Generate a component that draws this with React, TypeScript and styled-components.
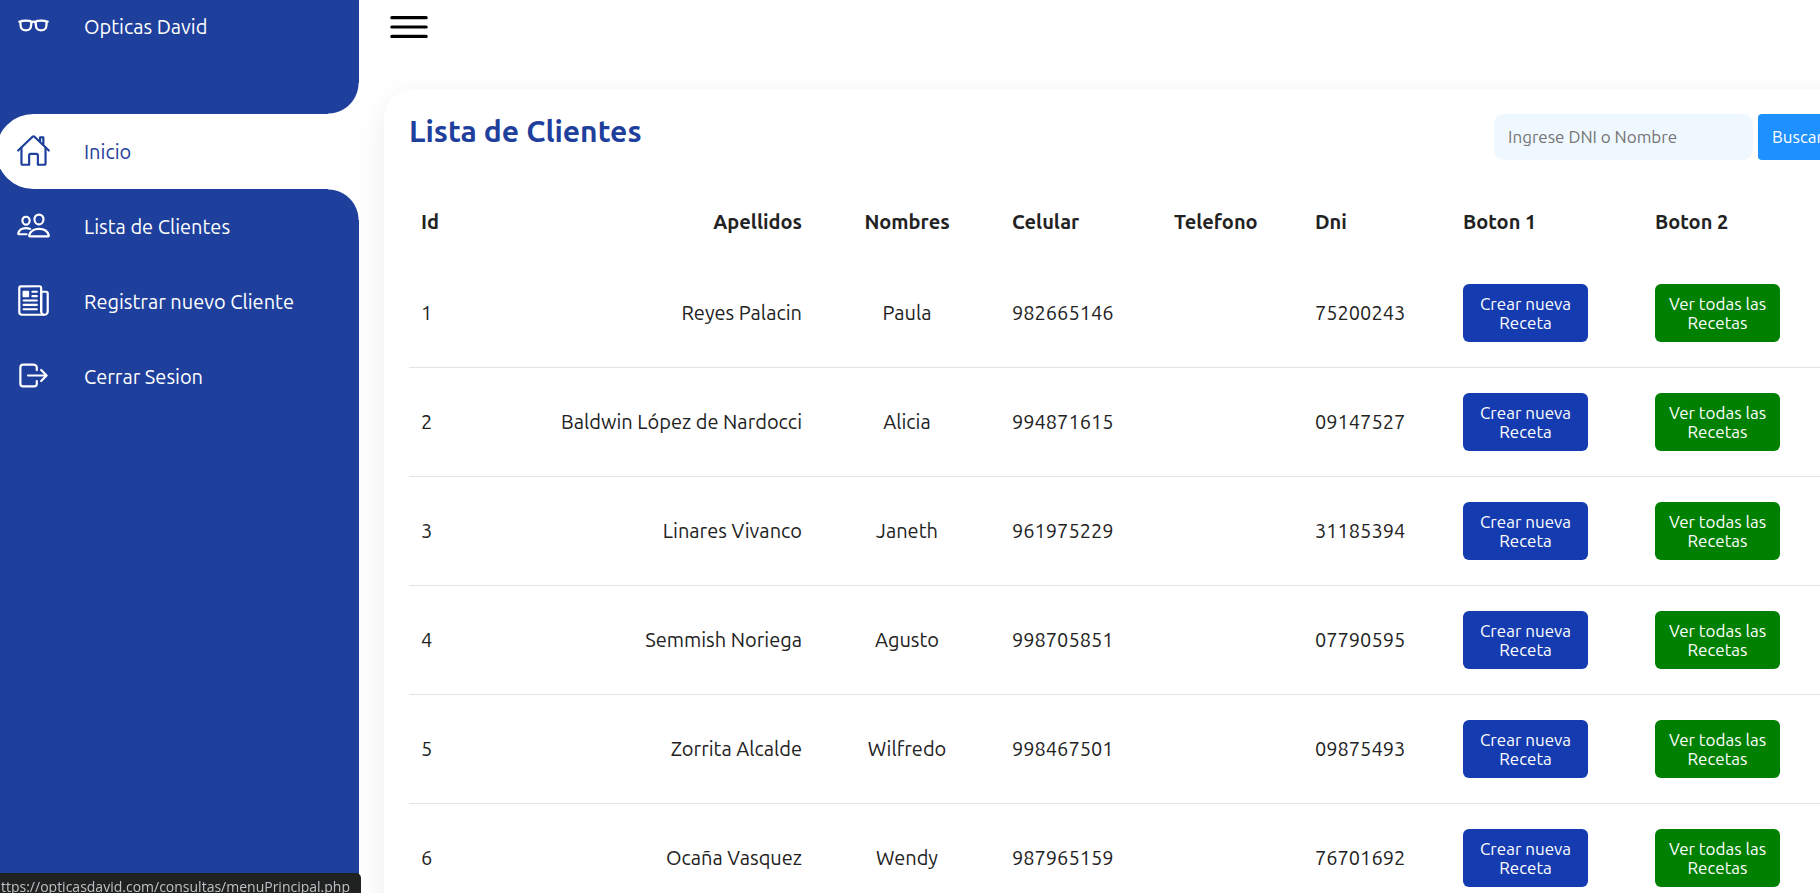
import React from "react";
import styled, { createGlobalStyle, css } from "styled-components";
import {
  IoGlassesOutline,
  IoHomeOutline,
  IoLogOutOutline,
  IoMenuOutline,
  IoNewspaperOutline,
  IoPeopleOutline,
} from "react-icons/io5";

const blue = "#1e409c";
const white = "#ffffff";

const GlobalStyle = createGlobalStyle`
  *, *::before, *::after {
    box-sizing: border-box;
  }
  body {
    margin: 0;
    background: ${white};
    color: #222222;
    font-family: "Ubuntu", "Noto Sans", sans-serif;
    font-size: 20px;
  }
  button, input {
    font-family: inherit;
    font-size: 17px;
  }
`;

const Shell = styled.div`
  display: flex;
  height: 100vh;
  overflow: hidden;
`;

const Sidebar = styled.nav`
  flex: 0 0 359px;
  overflow: hidden;
  background: ${blue};
`;

const linkLayout = css`
  display: flex;
  align-items: center;
  gap: 33px;
  padding-left: 20px;
  text-decoration: none;
  white-space: nowrap;

  svg {
    flex: none;
    width: 35px;
    height: 35px;
    margin-bottom: 2px;
  }
`;

const Brand = styled.a`
  ${linkLayout}
  height: 52px;
  margin: 0 0 62px -4px;
  color: ${white};
`;

const Menu = styled.ul`
  margin: 0 0 0 -4px;
  padding: 0;
  list-style: none;
`;

const MenuLink = styled.a<{ $active?: boolean }>`
  ${linkLayout}
  position: relative;
  height: 75px;
  color: ${(p) => (p.$active ? blue : white)};

  ${(p) =>
    p.$active &&
    css`
      background: ${white};
      border-radius: 38px 0 0 38px;

      &::before,
      &::after {
        content: "";
        position: absolute;
        right: 0;
        width: 31px;
        height: 31px;
        pointer-events: none;
      }
      &::before {
        bottom: 100%;
        background: radial-gradient(circle at top left, transparent 30px, ${white} 31px);
      }
      &::after {
        top: 100%;
        background: radial-gradient(circle at bottom left, transparent 30px, ${white} 31px);
      }
    `}
`;

const Main = styled.main`
  flex: 1;
  min-width: 0;
  overflow: auto;
  scrollbar-width: none;
`;

const Topbar = styled.header`
  display: flex;
  align-items: center;
  height: 54px;
  padding-left: 25px;
`;

const MenuToggle = styled.button`
  display: flex;
  padding: 0;
  border: 0;
  background: none;
  color: #000000;

  svg {
    width: 50px;
    height: 50px;
  }
`;

const Card = styled.section`
  margin: 35px -42px 25px 25px;
  padding: 25px;
  border-radius: 30px;
  background: ${white};
  box-shadow: 0 9px 31px rgba(0, 0, 0, 0.08);
`;

const CardHeader = styled.div`
  display: flex;
  justify-content: space-between;
  align-items: flex-start;
`;

const Title = styled.h1`
  margin: 0;
  color: ${blue};
  font-size: 30px;
  font-weight: 700;
  line-height: 34px;
`;

const Search = styled.form`
  display: flex;
  gap: 5px;
`;

const SearchInput = styled.input`
  width: 259px;
  height: 46px;
  padding: 0 14px 2px;
  border: 0;
  border-radius: 10px;
  background: #f0f8ff;

  &::placeholder {
    color: #757575;
    opacity: 1;
  }
`;

const SearchButton = styled.button`
  height: 46px;
  padding: 0 14px 2px;
  border: 0;
  border-radius: 4px;
  background: #1e90ff;
  color: ${white};
`;

const Table = styled.table`
  width: 100%;
  margin-top: 25px;
  border-collapse: collapse;
  table-layout: fixed;
  line-height: 24px;
`;

const Col = styled.col<{ $width?: number }>`
  width: ${(p) => (p.$width ? `${p.$width}px` : "auto")};
`;

type Align = "left" | "center" | "right";

const HeadCell = styled.th<{ $align?: Align }>`
  height: 74px;
  padding: 0 12px;
  font-weight: 700;
  text-align: ${(p) => p.$align ?? "left"};
`;

const Cell = styled.td<{ $align?: Align }>`
  padding: 25px 12px;
  text-align: ${(p) => p.$align ?? "left"};
`;

const Row = styled.tr`
  border-bottom: 1px solid #e3e3e3;
`;

const ActionButton = styled.button<{ $tone: string }>`
  display: block;
  width: 125px;
  height: 58px;
  padding: 0 12px;
  border: 0;
  border-radius: 6px;
  background: ${(p) => p.$tone};
  color: ${white};
  line-height: 19px;
`;

const LinkStatus = styled.div`
  position: fixed;
  bottom: 0;
  left: 0;
  display: flex;
  justify-content: flex-end;
  width: 361px;
  height: 20px;
  padding-right: 11px;
  overflow: hidden;
  border-radius: 0 5px 0 0;
  background: #202121;
  color: #bdc1c6;
  font-family: "Open Sans", sans-serif;
  font-size: 14px;
  line-height: 28px;
  white-space: nowrap;
`;

const menu = [
  { label: "Inicio", icon: IoHomeOutline, active: true },
  { label: "Lista de Clientes", icon: IoPeopleOutline },
  { label: "Registrar nuevo Cliente", icon: IoNewspaperOutline },
  { label: "Cerrar Sesion", icon: IoLogOutOutline },
];

const columns: { label: string; width?: number; align?: Align }[] = [
  { label: "Id", width: 56 },
  { label: "Apellidos", align: "right" },
  { label: "Nombres", width: 186, align: "center" },
  { label: "Celular", width: 162 },
  { label: "Telefono", width: 141 },
  { label: "Dni", width: 148 },
  { label: "Boton 1", width: 192 },
  { label: "Boton 2", width: 194 },
];

const clients = [
  { id: 1, last: "Reyes Palacin", first: "Paula", mobile: "982665146", phone: "", dni: "75200243" },
  { id: 2, last: "Baldwin López de Nardocci", first: "Alicia", mobile: "994871615", phone: "", dni: "09147527" },
  { id: 3, last: "Linares Vivanco", first: "Janeth", mobile: "961975229", phone: "", dni: "31185394" },
  { id: 4, last: "Semmish Noriega", first: "Agusto", mobile: "998705851", phone: "", dni: "07790595" },
  { id: 5, last: "Zorrita Alcalde", first: "Wilfredo", mobile: "998467501", phone: "", dni: "09875493" },
  { id: 6, last: "Ocaña Vasquez", first: "Wendy", mobile: "987965159", phone: "", dni: "76701692" },
];

export default function App() {
  return (
    <>
      <GlobalStyle />
      <Shell>
        <Sidebar>
          <Brand href="#">
            <IoGlassesOutline />
            Opticas David
          </Brand>
          <Menu>
            {menu.map(({ label, icon: Icon, active }) => (
              <li key={label}>
                <MenuLink href="#" $active={active}>
                  <Icon />
                  {label}
                </MenuLink>
              </li>
            ))}
          </Menu>
        </Sidebar>
        <Main>
          <Topbar>
            <MenuToggle type="button" aria-label="Menu">
              <IoMenuOutline />
            </MenuToggle>
          </Topbar>
          <Card>
            <CardHeader>
              <Title>Lista de Clientes</Title>
              <Search onSubmit={(e) => e.preventDefault()}>
                <SearchInput
                  type="text"
                  aria-label="Ingrese DNI o Nombre"
                  placeholder="Ingrese DNI o Nombre"
                />
                <SearchButton type="submit">Buscar</SearchButton>
              </Search>
            </CardHeader>
            <Table>
              <colgroup>
                {columns.map((c) => (
                  <Col key={c.label} $width={c.width} />
                ))}
              </colgroup>
              <thead>
                <tr>
                  {columns.map((c) => (
                    <HeadCell key={c.label} $align={c.align}>
                      {c.label}
                    </HeadCell>
                  ))}
                </tr>
              </thead>
              <tbody>
                {clients.map((c) => (
                  <Row key={c.id}>
                    <Cell>{c.id}</Cell>
                    <Cell $align="right">{c.last}</Cell>
                    <Cell $align="center">{c.first}</Cell>
                    <Cell>{c.mobile}</Cell>
                    <Cell>{c.phone}</Cell>
                    <Cell>{c.dni}</Cell>
                    <Cell>
                      <ActionButton type="button" $tone="#143bb0">
                        Crear nueva Receta
                      </ActionButton>
                    </Cell>
                    <Cell>
                      <ActionButton type="button" $tone="#008000">
                        Ver todas las Recetas
                      </ActionButton>
                    </Cell>
                  </Row>
                ))}
              </tbody>
            </Table>
          </Card>
        </Main>
      </Shell>
      <LinkStatus>https://opticasdavid.com/consultas/menuPrincipal.php</LinkStatus>
    </>
  );
}
